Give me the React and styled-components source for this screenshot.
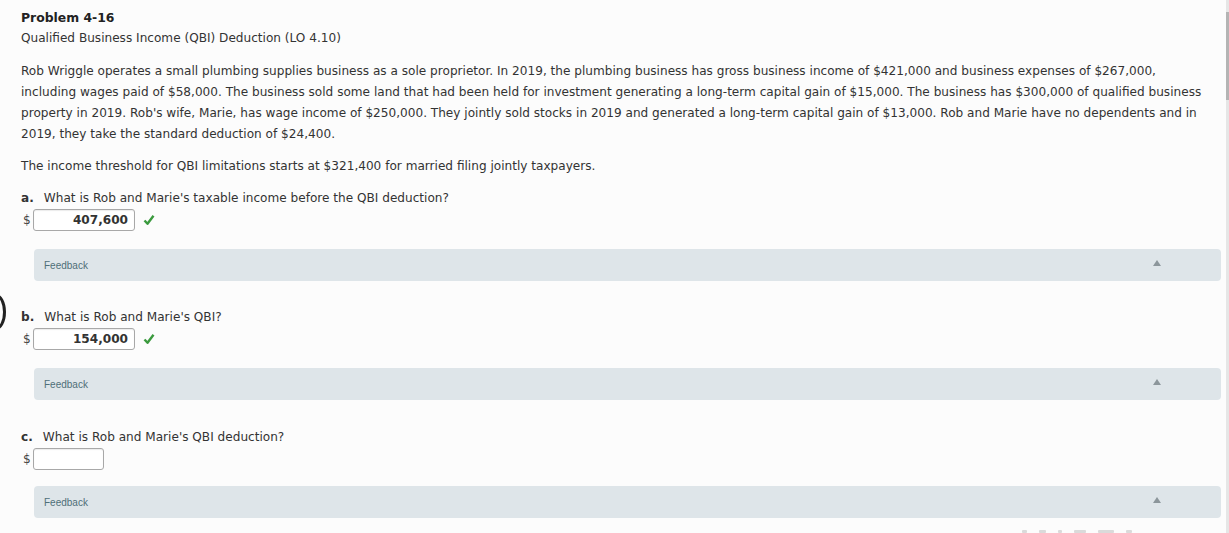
import React from "react";
import styled, { createGlobalStyle } from "styled-components";

const GlobalStyle = createGlobalStyle`
  html, body {
    margin: 0;
    padding: 0;
    background: #fcfcfc;
  }
  body {
    font-family: "DejaVu Sans", Verdana, sans-serif;
    color: #333;
    overflow: hidden;
  }
`;

const Page = styled.div`
  position: relative;
  height: 533px;
  overflow: hidden;
  padding: 7px 8px 0 21px;
  box-sizing: border-box;
  font-size: 12.1px;
  line-height: 21px;
`;

const Title = styled.div`
  font-weight: bold;
  color: #222;
  font-size: 12.4px;
`;

const SubTitle = styled.div`
  color: #333;
`;

const Paragraph = styled.p`
  margin: ${(p) => p.$top || 0}px 0 0;
  width: 1185px;
`;

const Question = styled.div`
  margin-top: ${(p) => p.$top}px;
`;

const Label = styled.div`
  b {
    font-weight: bold;
    margin-right: 10px;
  }
`;

const AnswerRow = styled.div`
  display: flex;
  align-items: center;
  height: 22px;
  margin-left: 2px;
`;

const Dollar = styled.span`
  color: #444;
  width: 10px;
`;

const Input = styled.div`
  box-sizing: border-box;
  width: ${(p) => p.$width}px;
  height: 22px;
  border: 1px solid #a8a8a8;
  border-radius: 3px;
  background: #fff;
  text-align: right;
  padding-right: 6px;
  font-weight: bold;
  color: #333;
  line-height: 20px;
  box-shadow: inset 0 1px 1px rgba(0, 0, 0, 0.08);
`;

const Check = styled.svg`
  margin-left: 8px;
`;

const Feedback = styled.div`
  display: flex;
  align-items: center;
  justify-content: space-between;
  box-sizing: border-box;
  margin: ${(p) => p.$top}px 0 0 13px;
  width: 1187px;
  height: 32px;
  border-radius: 4px;
  background: #dee5e9;
  padding: 0 60px 0 10px;
  font-family: "Liberation Sans", Arial, sans-serif;
  font-size: 10px;
  color: #4f6f78;
`;

const Arrow = styled.span`
  width: 0;
  height: 0;
  border-left: 4px solid transparent;
  border-right: 4px solid transparent;
  border-bottom: 6px solid #8c969b;
  margin-top: -4px;
`;

const Track = styled.div`
  position: fixed;
  top: 0;
  right: 0;
  width: 3px;
  height: 533px;
  background: #e6e6e6;
`;

const Thumb = styled.div`
  margin-top: 12px;
  height: 88px;
  background: #b4b4b4;
`;

const Bracket = styled.div`
  position: absolute;
  left: -14px;
  top: 294px;
  width: 20px;
  height: 36px;
  border-radius: 50%;
  border: 3px solid #222;
  box-sizing: border-box;
`;

const Fragments = styled.div`
  position: absolute;
  left: 1022px;
  top: 530px;
  display: flex;
  gap: 12px;
`;

const Fragment = styled.span`
  width: ${(p) => p.$w}px;
  height: 3px;
  background: #dadada;
  border-radius: 1px;
`;

const CheckMark = () => (
  <Check width="12" height="12" viewBox="0 0 12 12">
    <path d="M1.5 6.5 L4.5 9.8 L10.5 1.8" fill="none" stroke="#3b9a3e" strokeWidth="2.4" strokeLinejoin="round" />
  </Check>
);

const FeedbackBar = ({ top }) => (
  <Feedback $top={top}>
    <span>Feedback</span>
    <Arrow />
  </Feedback>
);

const Answer = ({ value, width }) => (
  <AnswerRow>
    <Dollar>$</Dollar>
    <Input $width={width}>{value}</Input>
    {value && <CheckMark />}
  </AnswerRow>
);

const App = () => {
  return (
    <>
      <GlobalStyle />
      <Page>
        <Title>Problem 4-16</Title>
        <SubTitle>Qualified Business Income (QBI) Deduction (LO 4.10)</SubTitle>
        <Paragraph $top={12}>
          Rob Wriggle operates a small plumbing supplies business as a sole proprietor. In 2019, the plumbing business has gross business income of $421,000 and business expenses of $267,000, including wages paid of $58,000. The business sold some land that had been held for investment generating a long-term capital gain of $15,000. The business has $300,000 of qualified business property in 2019. Rob's wife, Marie, has wage income of $250,000. They jointly sold stocks in 2019 and generated a long-term capital gain of $13,000. Rob and Marie have no dependents and in 2019, they take the standard deduction of $24,400.
        </Paragraph>
        <Paragraph $top={11}>
          The income threshold for QBI limitations starts at $321,400 for married filing jointly taxpayers.
        </Paragraph>
        <Question $top={11}>
          <Label><b>a.</b>What is Rob and Marie's taxable income before the QBI deduction?</Label>
          <Answer value="407,600" width={102} />
          <FeedbackBar top={18} />
        </Question>
        <Question $top={26}>
          <Label><b>b.</b>What is Rob and Marie's QBI?</Label>
          <Answer value="154,000" width={102} />
          <FeedbackBar top={18} />
        </Question>
        <Question $top={27}>
          <Label><b>c.</b>What is Rob and Marie's QBI deduction?</Label>
          <Answer value="" width={71} />
          <FeedbackBar top={16} />
        </Question>
        <Bracket />
        <Fragments>
          <Fragment $w={5} />
          <Fragment $w={7} />
          <Fragment $w={4} />
          <Fragment $w={12} />
          <Fragment $w={16} />
          <Fragment $w={6} />
        </Fragments>
      </Page>
      <Track>
        <Thumb />
      </Track>
    </>
  );
};

export default App;
